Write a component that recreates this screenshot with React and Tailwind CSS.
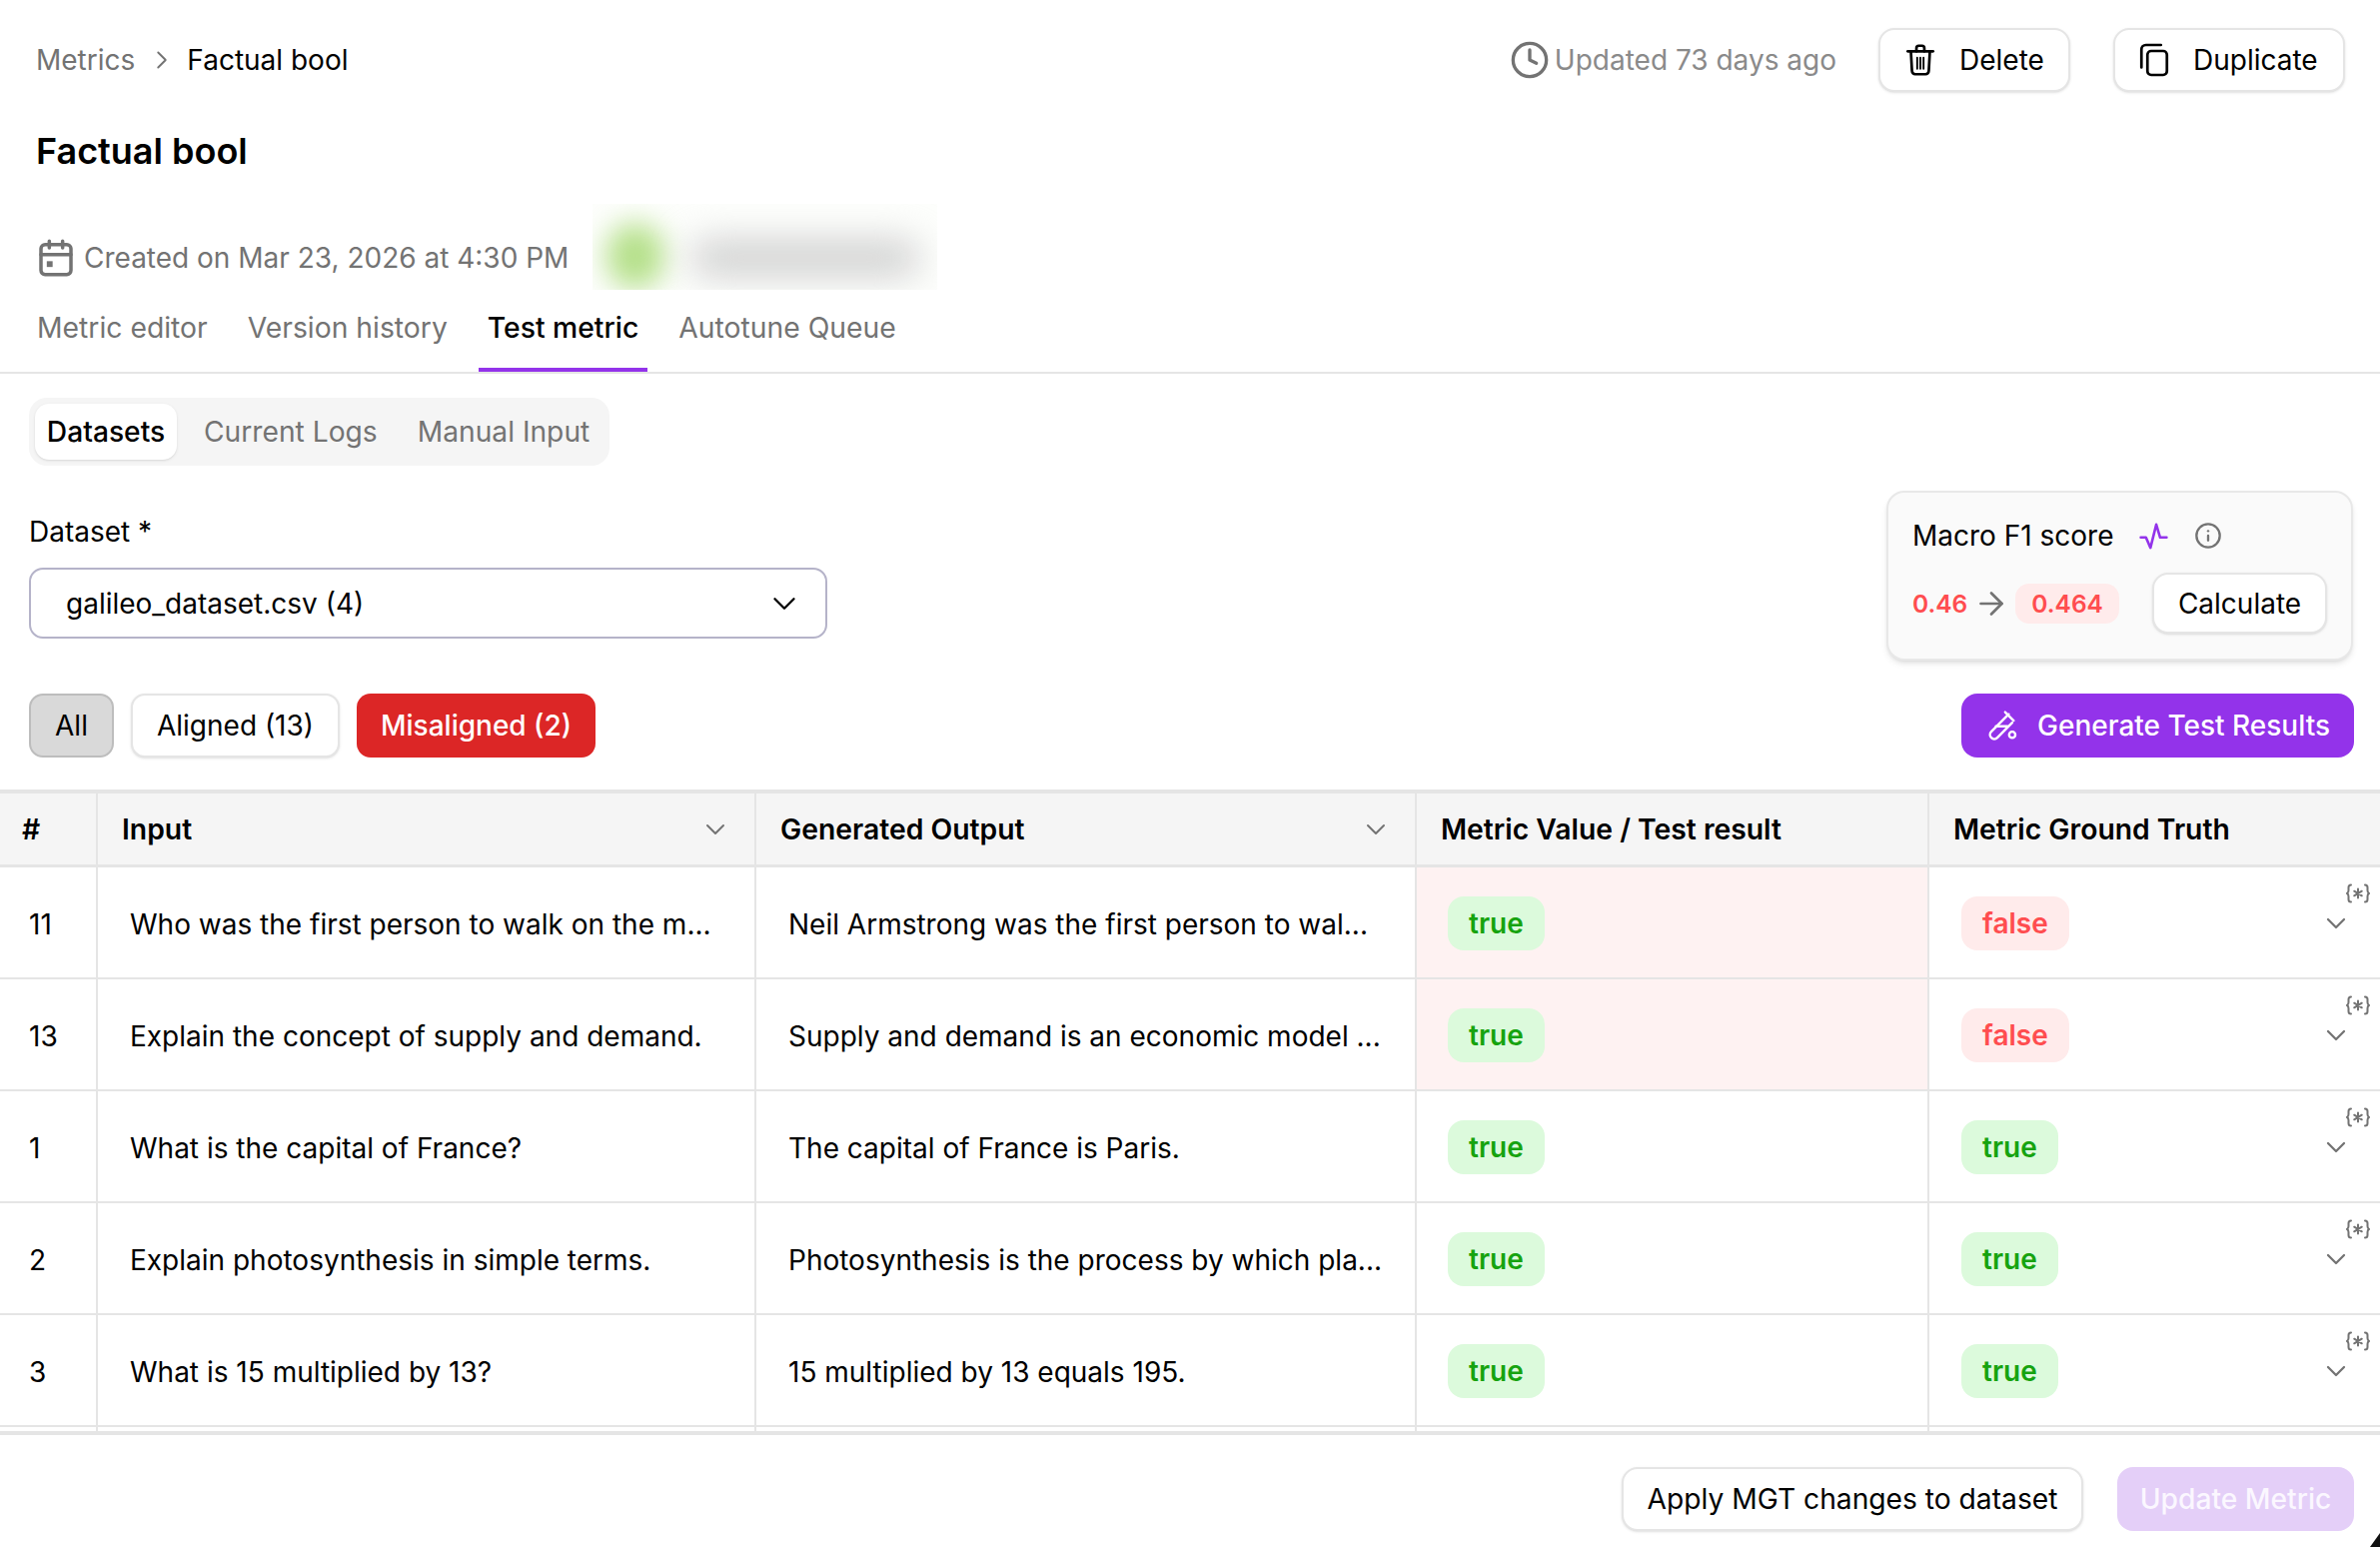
import { ArrowRight, ChevronDown, ChevronRight, Clock, Info } from 'lucide-react';

// Small drawn icons that the packages don't have in this shape
const TrashIcon = () => (
  <svg width="38" height="38" viewBox="0 0 24 24" fill="none" stroke="currentColor" strokeWidth="1.700" strokeLinecap="round" strokeLinejoin="round">
    <path d="M4 6.500h16" />
    <path d="M9.500 6.500V4.500A1.500 1.500 0 0 1 11 3h2a1.500 1.500 0 0 1 1.500 1.500v2" />
    <path d="M6 6.500l.7 12.500A2 2 0 0 0 8.700 21h6.600a2 2 0 0 0 2-2L18 6.500" />
    <path d="M10 10.500v7M12 10.500v7M14 10.500v7" strokeWidth="1.200" />
  </svg>
);

const CopyIcon = () => (
  <svg width="36" height="36" viewBox="0 0 24 24" fill="none" stroke="currentColor" strokeWidth="1.800" strokeLinecap="round" strokeLinejoin="round">
    <rect x="7.500" y="6" width="13" height="16" rx="2.500" />
    <path d="M3.500 17V5a3 3 0 0 1 3-3h10" />
  </svg>
);

const CalendarIcon = () => (
  <svg width="40" height="40" viewBox="0 0 24 24" fill="none" stroke="#737373" strokeWidth="2.100" strokeLinecap="round" strokeLinejoin="round">
    <rect x="3" y="4" width="18" height="18" rx="2.500" />
    <path d="M3 10h18M8 2v4M16 2v4" />
    <rect x="6.500" y="14" width="3.500" height="3.500" fill="#737373" stroke="none" />
  </svg>
);

const PulseIcon = () => (
  <svg width="31" height="31" viewBox="0 0 24 24" fill="none" stroke="#9333ea" strokeWidth="2" strokeLinecap="round" strokeLinejoin="round">
    <path d="M2 13h4l3.500 8L14 3l3 10h5" />
  </svg>
);

const TubeIcon = () => (
  <svg width="34" height="34" viewBox="0 0 24 24" fill="none" stroke="currentColor" strokeWidth="1.700" strokeLinecap="round" strokeLinejoin="round">
    <path d="M14 2.500l6 6" />
    <path d="M16.500 4L4.200 16.300a3 3 0 0 0 4.300 4.300L19 10" />
    <path d="M7.500 12.500h8" />
    <circle cx="19" cy="18.500" r="2.200" />
  </svg>
);

const BraceIcon = () => (
  <svg width="24" height="20" viewBox="0 0 24 20" fill="none" stroke="#737373" strokeWidth="2" strokeLinecap="round" strokeLinejoin="round">
    <path d="M5 1.500c-2 0-2.500 1-2.500 2.500v3c0 1.500-.5 2.500-1.500 3 1 .5 1.500 1.500 1.500 3v3c0 1.500.5 2.500 2.500 2.500" />
    <path d="M19 1.500c2 0 2.500 1 2.500 2.500v3c0 1.500.5 2.500 1.500 3-1 .5-1.500 1.500-1.500 3v3c0 1.500-.5 2.500-2.500 2.500" />
    <path d="M12 5.500v9M8.200 7.700l7.600 4.600M15.800 7.700l-7.600 4.600" strokeWidth="2" />
  </svg>
);

const Badge = ({ ok, children }) => (
  <span className={`inline-flex h-[54px] items-center rounded-[16px] px-[21px] font-semibold ${ok ? 'bg-[#dcfadc] text-[#16a30f]' : 'bg-[#ffebeb] text-[#ff4d4f]'}`}>
    {children}
  </span>
);

const rows = [
  { id: '11', input: 'Who was the first person to walk on the m...', output: 'Neil Armstrong was the first person to wal...', bad: true },
  { id: '13', input: 'Explain the concept of supply and demand.', output: 'Supply and demand is an economic model ...', bad: true },
  { id: '1', input: 'What is the capital of France?', output: 'The capital of France is Paris.' },
  { id: '2', input: 'Explain photosynthesis in simple terms.', output: 'Photosynthesis is the process by which pla...' },
  { id: '3', input: 'What is 15 multiplied by 13?', output: '15 multiplied by 13 equals 195.' },
];

const gridCols = 'grid grid-cols-[98px_659px_661px_513px_1fr]';
const cell = 'flex items-center border-r-2 border-[#e5e5e5]';

const App = () => {
  return (
    <div className="flex h-screen flex-col overflow-hidden bg-white font-['Inter',sans-serif] text-[28px] leading-[40px] text-black">
      {/* Top bar */}
      <div className="mt-[28px] flex h-[64px] items-center justify-between pl-[36px] pr-[35px]">
        <div className="flex items-center">
          <span className="text-[#737373]">Metrics</span>
          <ChevronRight className="ml-[12px] mr-[10px] text-[#737373]" size={30} strokeWidth={1.500} />
          <span>Factual bool</span>
        </div>
        <div className="flex items-center">
          <Clock className="mr-[5px] text-[#737373]" size={40} strokeWidth={2} />
          <span className="text-[#8a8a8a]">Updated 73 days ago</span>
          <button className="ml-[42px] flex h-[64px] w-[192px] items-center gap-[20px] rounded-[16px] border-2 border-[#e5e5e5] bg-white pl-[21px] shadow-sm">
            <TrashIcon />
            Delete
          </button>
          <button className="ml-[43px] flex h-[64px] w-[232px] items-center gap-[21px] rounded-[16px] border-2 border-[#e5e5e5] bg-white pl-[21px] shadow-sm">
            <CopyIcon />
            Duplicate
          </button>
        </div>
      </div>

      <h1 className="ml-[36px] mt-[37px] text-[36px] font-semibold leading-[44px]">Factual bool</h1>

      <div className="ml-[36px] mt-[31px] flex h-[86px] items-center text-[#737373]">
        <span className="mt-[22px]"><CalendarIcon /></span>
        <span className="ml-[8px] mt-[22px]">Created on Mar 23, 2026 at 4:30 PM</span>
        {/* blurred owner */}
        <div className="ml-[24px] flex h-[86px] w-[345px] items-center overflow-hidden bg-[#fdfefc]">
          <div className="ml-[14px] mt-[18px] h-[66px] w-[58px] rounded-full bg-[#b5e08a] blur-[14px]" />
          <div className="ml-[26px] mt-[22px] h-[36px] w-[230px] rounded-full bg-[#cfcfcf] blur-[18px]" />
        </div>
      </div>

      {/* Page tabs */}
      <div className="flex gap-[22px] border-b-2 border-[#e5e5e5] pl-[28px] text-[28.3px]">
        {['Metric editor', 'Version history', 'Test metric', 'Autotune Queue'].map((t) => (
          <div key={t} className={`border-b-4 px-[9px] pb-[20px] pt-[18px] ${t === 'Test metric' ? 'border-[#9333ea] font-medium text-black' : 'border-transparent text-[#737373]'}`}>
            {t}
          </div>
        ))}
      </div>

      {/* Source switcher */}
      <div className="ml-[29px] mt-[24px] flex h-[68px] w-[581px] items-center gap-[15px] rounded-[18px] bg-[#f5f5f5] p-[6px] text-[28.2px]">
        <div className="flex h-[56px] w-[142px] items-center justify-center rounded-[14px] bg-white font-medium shadow-sm">Datasets</div>
        <div className="px-[12px] text-[#737373]">Current Logs</div>
        <div className="pl-[13px] text-[#737373]">Manual Input</div>
      </div>

      <div className="mt-[25px] flex justify-between pl-[29px] pr-[27px]">
        <div className="pt-[21px]">
          <div>Dataset *</div>
          <div className="mt-[16px] flex h-[71px] w-[799px] items-center justify-between rounded-[14px] border-2 border-[#b5b3c9] pl-[35px] pr-[22px]">
            <span>galileo_dataset.csv (4)</span>
            <ChevronDown size={38} strokeWidth={1.500} />
          </div>
        </div>
        <div className="h-[170px] w-[467px] rounded-[18px] border-2 border-[#e8e8e8] bg-[#fafafa] px-[24px] pt-[23px] shadow-md">
          <div className="flex items-center">
            <span>Macro F1 score</span>
            <span className="ml-[24px]"><PulseIcon /></span>
            <Info className="ml-[25px] text-[#737373]" size={28} strokeWidth={2} />
          </div>
          <div className="mt-[17px] flex items-center justify-between">
            <div className="flex items-center">
              <span className="text-[24.500px] font-semibold text-[#ff4d4f]">0.46</span>
              <ArrowRight className="ml-[6px] text-[#737373]" size={36} strokeWidth={1.800} />
              <span className="ml-[6px] flex h-[40px] items-center rounded-[14px] bg-[#ffebeb] px-[16px] text-[24.500px] font-semibold text-[#ff4d4f]">0.464</span>
            </div>
            <button className="flex h-[61px] w-[175px] shrink-0 items-center justify-center rounded-[16px] border-2 border-[#e5e5e5] bg-white shadow-sm">Calculate</button>
          </div>
        </div>
      </div>

      <div className="mt-[33px] flex items-center justify-between pl-[29px] pr-[26px]">
        <div className="flex items-center">
          <button className="flex h-[64px] w-[85px] items-center justify-center rounded-[14px] border-2 border-[#bdbdbd] bg-[#d9d9d9]">All</button>
          <button className="ml-[17px] flex h-[64px] w-[209px] items-center justify-center rounded-[14px] border-2 border-[#e5e5e5] bg-white shadow-sm">Aligned (13)</button>
          <button className="ml-[17px] flex h-[64px] w-[239px] items-center justify-center rounded-[14px] bg-[#dc2626] font-medium text-white">Misaligned (2)</button>
        </div>
        <button className="flex h-[64px] w-[393px] items-center gap-[18px] rounded-[16px] bg-[#9333ea] pl-[24px] font-medium text-white">
          <TubeIcon />
          Generate Test Results
        </button>
      </div>

      {/* Results table */}
      <div className="mt-[32px] flex min-h-0 flex-1 flex-col overflow-hidden border-t-4 border-[#e5e5e5]">
        <div className={`${gridCols} h-[74px] border-b-[3px] border-[#e5e5e5] bg-[#f5f5f5] text-[28.3px] font-semibold`}>
          <div className={`${cell} pl-[22px]`}>#</div>
          <div className={`${cell} justify-between pl-[24px] pr-[23px]`}>
            Input
            <ChevronDown className="text-[#737373]" size={32} strokeWidth={1.500} />
          </div>
          <div className={`${cell} justify-between pl-[24px] pr-[23px]`}>
            Generated Output
            <ChevronDown className="text-[#737373]" size={32} strokeWidth={1.500} />
          </div>
          <div className={`${cell} pl-[24px]`}>Metric Value / Test result</div>
          <div className="flex items-center pl-[24px]">Metric Ground Truth</div>
        </div>
        {rows.map((r) => (
          <div key={r.id} className={`${gridCols} h-[112px] shrink-0 border-b-2 border-[#e5e5e5]`}>
            <div className={`${cell} pl-[29px] pt-[3px]`}>{r.id}</div>
            <div className={`${cell} pl-[32px] pt-[3px]`}>{r.input}</div>
            <div className={`${cell} pl-[32px] pt-[3px]`}>{r.output}</div>
            <div className={`${cell} pl-[31px] pt-[2px] ${r.bad ? 'bg-[#fef2f2]' : ''}`}>
              <Badge ok>true</Badge>
            </div>
            <div className="relative flex items-center pl-[32px] pt-[2px]">
              <Badge ok={!r.bad}>{r.bad ? 'false' : 'true'}</Badge>
              <span className="absolute right-[10px] top-[16px]"><BraceIcon /></span>
              <ChevronDown className="absolute right-[28px] top-[40px] text-[#737373]" size={32} strokeWidth={1.700} />
            </div>
          </div>
        ))}
        <div className={`${gridCols} min-h-0 flex-1`}>
          <div className={cell} />
          <div className={cell} />
          <div className={cell} />
          <div className={cell} />
          <div />
        </div>
      </div>

      {/* Footer actions */}
      <div className="relative flex h-[116px] shrink-0 justify-end gap-[34px] border-t-4 border-[#e5e5e5] pr-[26px] pt-[32px] text-[28.200px]">
        <button className="flex h-[64px] w-[462px] items-center justify-center rounded-[16px] border-2 border-[#e5e5e5] bg-white shadow-sm">Apply MGT changes to dataset</button>
        <button className="flex h-[64px] w-[237px] items-center justify-center rounded-[16px] bg-[#e4cff8] font-medium text-[#fbf7ff]">Update Metric</button>
        <svg className="absolute bottom-0 right-0" width="10" height="14" viewBox="0 0 10 14">
          <path d="M10 0V14H0Z" fill="#111" />
        </svg>
      </div>
    </div>
  );
};

export default App;
